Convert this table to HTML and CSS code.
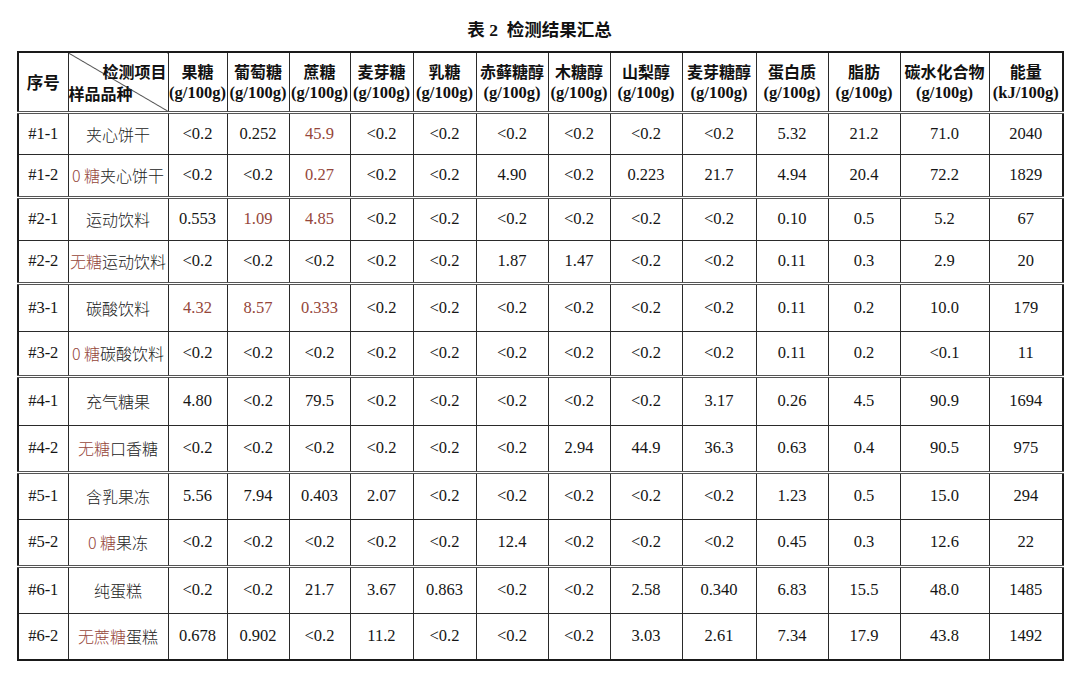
FILE: index.html
```html
<!DOCTYPE html>
<html lang="zh-CN">
<head>
<meta charset="utf-8">
<title>表 2 检测结果汇总</title>
<link rel="stylesheet" href="styles.css">
</head>
<body>
<div class="page">
  <h1 class="title">表 2&nbsp; 检测结果汇总</h1>
  <table class="results">
    <colgroup>
      <col class="c-id"><col class="c-name"><col class="c59"><col class="c62"><col class="c61"><col class="c63"><col class="c63"><col class="c72"><col class="c62"><col class="c72"><col class="c74"><col class="c72"><col class="c72"><col class="c89"><col class="c74">
    </colgroup>
    <thead>
      <tr class="head">
        <th class="zh">序号</th>
        <th class="diag"><span class="d-top">检测项目</span><span class="d-bot">样品品种</span></th>
        <th><span class="zh">果糖</span><br>(g/100g)</th>
        <th><span class="zh">葡萄糖</span><br>(g/100g)</th>
        <th><span class="zh">蔗糖</span><br>(g/100g)</th>
        <th><span class="zh">麦芽糖</span><br>(g/100g)</th>
        <th><span class="zh">乳糖</span><br>(g/100g)</th>
        <th><span class="zh">赤藓糖醇</span><br>(g/100g)</th>
        <th><span class="zh">木糖醇</span><br>(g/100g)</th>
        <th><span class="zh">山梨醇</span><br>(g/100g)</th>
        <th><span class="zh">麦芽糖醇</span><br>(g/100g)</th>
        <th><span class="zh">蛋白质</span><br>(g/100g)</th>
        <th><span class="zh">脂肪</span><br>(g/100g)</th>
        <th><span class="zh">碳水化合物</span><br>(g/100g)</th>
        <th><span class="zh">能量</span><br>(kJ/100g)</th>
      </tr>
    </thead>
    <tbody>
      <tr class="r42">
        <td>#1-1</td><td class="name">夹心饼干</td>
        <td>&lt;0.2</td><td>0.252</td><td class="red">45.9</td><td>&lt;0.2</td><td>&lt;0.2</td><td>&lt;0.2</td><td>&lt;0.2</td><td>&lt;0.2</td><td>&lt;0.2</td><td>5.32</td><td>21.2</td><td>71.0</td><td>2040</td>
      </tr>
      <tr class="r43">
        <td>#1-2</td><td class="name"><span class="red">0 糖</span>夹心饼干</td>
        <td>&lt;0.2</td><td>&lt;0.2</td><td class="red">0.27</td><td>&lt;0.2</td><td>&lt;0.2</td><td>4.90</td><td>&lt;0.2</td><td>0.223</td><td>21.7</td><td>4.94</td><td>20.4</td><td>72.2</td><td>1829</td>
      </tr>
      <tr class="r43 group">
        <td>#2-1</td><td class="name">运动饮料</td>
        <td>0.553</td><td class="red">1.09</td><td class="red">4.85</td><td>&lt;0.2</td><td>&lt;0.2</td><td>&lt;0.2</td><td>&lt;0.2</td><td>&lt;0.2</td><td>&lt;0.2</td><td>0.10</td><td>0.5</td><td>5.2</td><td>67</td>
      </tr>
      <tr class="r43">
        <td>#2-2</td><td class="name"><span class="red">无糖</span>运动饮料</td>
        <td>&lt;0.2</td><td>&lt;0.2</td><td>&lt;0.2</td><td>&lt;0.2</td><td>&lt;0.2</td><td>1.87</td><td>1.47</td><td>&lt;0.2</td><td>&lt;0.2</td><td>0.11</td><td>0.3</td><td>2.9</td><td>20</td>
      </tr>
      <tr class="r48 group">
        <td>#3-1</td><td class="name">碳酸饮料</td>
        <td class="red">4.32</td><td class="red">8.57</td><td class="red">0.333</td><td>&lt;0.2</td><td>&lt;0.2</td><td>&lt;0.2</td><td>&lt;0.2</td><td>&lt;0.2</td><td>&lt;0.2</td><td>0.11</td><td>0.2</td><td>10.0</td><td>179</td>
      </tr>
      <tr class="r45">
        <td>#3-2</td><td class="name"><span class="red">0 糖</span>碳酸饮料</td>
        <td>&lt;0.2</td><td>&lt;0.2</td><td>&lt;0.2</td><td>&lt;0.2</td><td>&lt;0.2</td><td>&lt;0.2</td><td>&lt;0.2</td><td>&lt;0.2</td><td>&lt;0.2</td><td>0.11</td><td>0.2</td><td>&lt;0.1</td><td>11</td>
      </tr>
      <tr class="r49 group">
        <td>#4-1</td><td class="name">充气糖果</td>
        <td>4.80</td><td>&lt;0.2</td><td>79.5</td><td>&lt;0.2</td><td>&lt;0.2</td><td>&lt;0.2</td><td>&lt;0.2</td><td>&lt;0.2</td><td>3.17</td><td>0.26</td><td>4.5</td><td>90.9</td><td>1694</td>
      </tr>
      <tr class="r47">
        <td>#4-2</td><td class="name"><span class="red">无糖</span>口香糖</td>
        <td>&lt;0.2</td><td>&lt;0.2</td><td>&lt;0.2</td><td>&lt;0.2</td><td>&lt;0.2</td><td>&lt;0.2</td><td>2.94</td><td>44.9</td><td>36.3</td><td>0.63</td><td>0.4</td><td>90.5</td><td>975</td>
      </tr>
      <tr class="r47 group">
        <td>#5-1</td><td class="name">含乳果冻</td>
        <td>5.56</td><td>7.94</td><td>0.403</td><td>2.07</td><td>&lt;0.2</td><td>&lt;0.2</td><td>&lt;0.2</td><td>&lt;0.2</td><td>&lt;0.2</td><td>1.23</td><td>0.5</td><td>15.0</td><td>294</td>
      </tr>
      <tr class="r47">
        <td>#5-2</td><td class="name"><span class="red">0 糖</span>果冻</td>
        <td>&lt;0.2</td><td>&lt;0.2</td><td>&lt;0.2</td><td>&lt;0.2</td><td>&lt;0.2</td><td>12.4</td><td>&lt;0.2</td><td>&lt;0.2</td><td>&lt;0.2</td><td>0.45</td><td>0.3</td><td>12.6</td><td>22</td>
      </tr>
      <tr class="r47 group">
        <td>#6-1</td><td class="name">纯蛋糕</td>
        <td>&lt;0.2</td><td>&lt;0.2</td><td>21.7</td><td>3.67</td><td>0.863</td><td>&lt;0.2</td><td>&lt;0.2</td><td>2.58</td><td>0.340</td><td>6.83</td><td>15.5</td><td>48.0</td><td>1485</td>
      </tr>
      <tr class="r47">
        <td>#6-2</td><td class="name"><span class="red">无蔗糖</span>蛋糕</td>
        <td>0.678</td><td>0.902</td><td>&lt;0.2</td><td>11.2</td><td>&lt;0.2</td><td>&lt;0.2</td><td>&lt;0.2</td><td>3.03</td><td>2.61</td><td>7.34</td><td>17.9</td><td>43.8</td><td>1492</td>
      </tr>
    </tbody>
  </table>
</div>
</body>
</html>
```

FILE: styles.css
```css
html, body {
  margin: 0;
  padding: 0;
  background: #ffffff;
}

.page {
  width: 1080px;
  height: 677px;
  padding: 0 0 0 17px;
  box-sizing: border-box;
  font-family: "Liberation Serif", "Noto Sans CJK SC", serif;
  color: #151515;
}

.title {
  margin: 0;
  width: 1045px;
  height: 51px;
  padding-top: 19px;
  box-sizing: border-box;
  text-align: center;
  font-family: "Liberation Serif", "Noto Sans CJK SC", sans-serif;
  font-size: 17.5px;
  line-height: 22px;
  font-weight: 700;
  color: #111;
}

.results {
  width: 1045px;
  table-layout: fixed;
  border-collapse: collapse;
  border: 2px solid #1a1a1a;
  font-size: 16px;
}

.c-id { width: 50px; }
.c-name { width: 100px; }
.c59 { width: 59px; }
.c61 { width: 61px; }
.c62 { width: 62px; }
.c63 { width: 63px; }
.c72 { width: 72px; }
.c74 { width: 74px; }
.c89 { width: 89px; }

.results th,
.results td {
  border: 1px solid #2a2a2a;
  padding: 0;
  text-align: center;
  vertical-align: middle;
  white-space: nowrap;
  overflow: visible;
}

.results th {
  font-weight: 700;
  font-size: 16.5px;
  line-height: 20px;
  color: #111;
}

.head {
  height: 60px;
}

.results thead tr {
  border-bottom: 3px double #555;
}

.zh {
  font-family: "Noto Sans CJK SC", sans-serif;
  font-weight: 700;
  font-size: 16px;
  letter-spacing: 0;
}

.diag {
  position: relative;
  background: linear-gradient(to top right,
    transparent calc(50% - 0.8px),
    #2a2a2a 50%,
    transparent calc(50% + 0.8px));
}

.d-top,
.d-bot {
  position: absolute;
  font-family: "Noto Sans CJK SC", sans-serif;
  font-weight: 700;
  font-size: 16px;
  line-height: 20px;
}

.d-top {
  top: 8px;
  right: 1px;
}

.d-bot {
  bottom: 8px;
  left: 0;
}

.results td {
  font-size: 16.5px;
  line-height: 20px;
}

.results td.name {
  font-family: "Noto Sans CJK SC", sans-serif;
  font-weight: 300;
  font-size: 16px;
  color: #222;
}

.red {
  color: #95463a;
}

.results td.name .red {
  color: #95463a;
}

.group {
  border-top: 3px double #555;
}

.r42 { height: 42px; }
.r43 { height: 43px; }
.r45 { height: 45px; }
.r47 { height: 47px; }
.r48 { height: 48px; }
.r49 { height: 49px; }
```
